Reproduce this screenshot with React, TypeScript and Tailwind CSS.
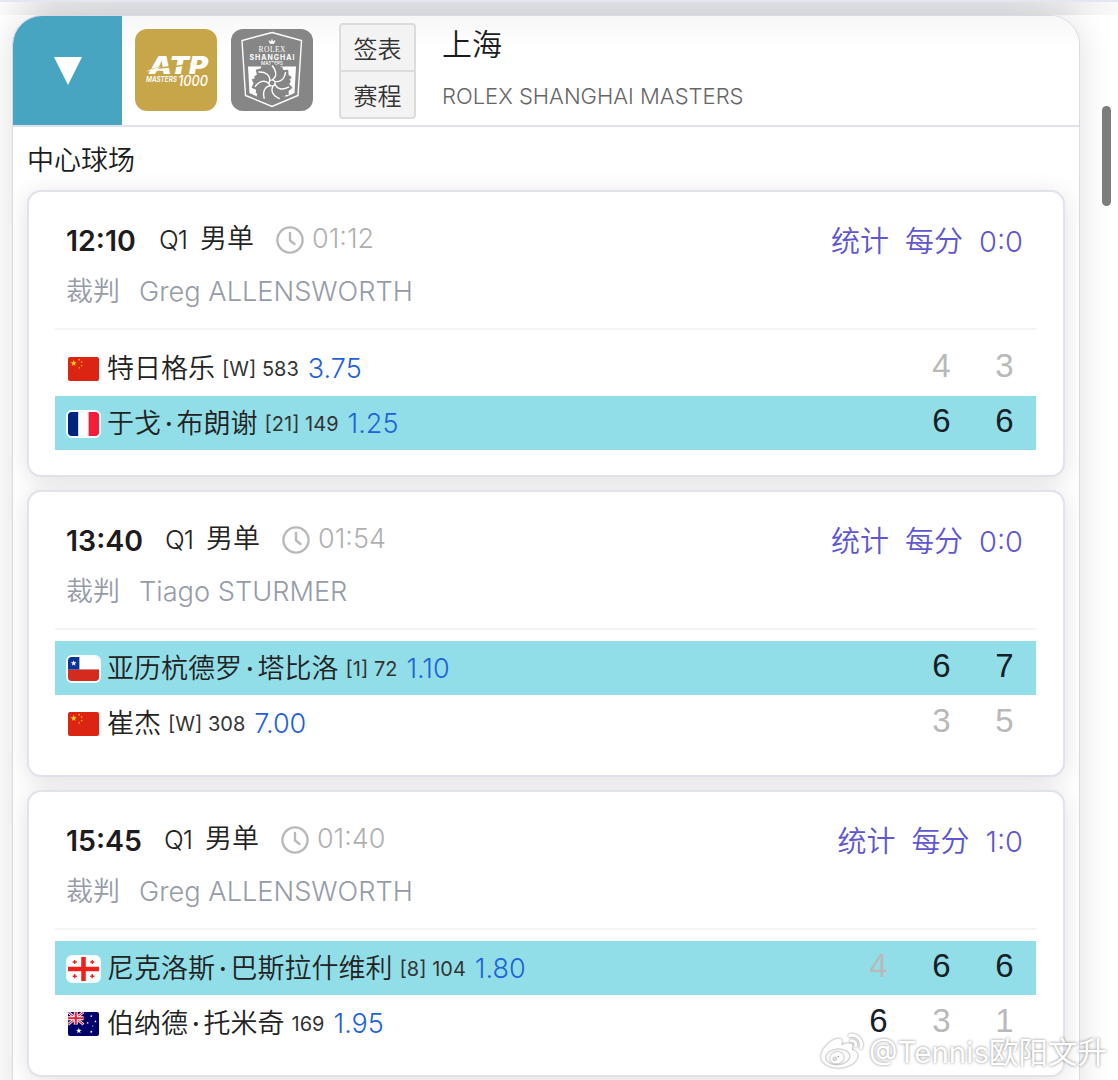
import { Fragment, type ReactNode } from 'react'
import { FaWeibo } from 'react-icons/fa'

type Country = 'CHN' | 'FRA' | 'CHI' | 'GEO' | 'AUS'

type Player = {
  name: string;
  country: Country;
  rank: string;
  odds: string;
  scores: [string, boolean][]; // [games, set won]
  winner?: boolean;
};

type Match = {
  time: string;
  round: string;
  duration: string;
  umpire: string;
  h2h: string;
  players: Player[];
};

const MATCHES: Match[] = [
  {
    time: '12:10',
    round: 'Q1',
    duration: '01:12',
    umpire: 'Greg ALLENSWORTH',
    h2h: '0:0',
    players: [
      { name: '特日格乐', country: 'CHN', rank: '[W] 583', odds: '3.75', scores: [['4', false], ['3', false]] },
      { name: '于戈·布朗谢', country: 'FRA', rank: '[21] 149', odds: '1.25', scores: [['6', true], ['6', true]], winner: true },
    ],
  },
  {
    time: '13:40',
    round: 'Q1',
    duration: '01:54',
    umpire: 'Tiago STURMER',
    h2h: '0:0',
    players: [
      { name: '亚历杭德罗·塔比洛', country: 'CHI', rank: '[1] 72', odds: '1.10', scores: [['6', true], ['7', true]], winner: true },
      { name: '崔杰', country: 'CHN', rank: '[W] 308', odds: '7.00', scores: [['3', false], ['5', false]] },
    ],
  },
  {
    time: '15:45',
    round: 'Q1',
    duration: '01:40',
    umpire: 'Greg ALLENSWORTH',
    h2h: '1:0',
    players: [
      { name: '尼克洛斯·巴斯拉什维利', country: 'GEO', rank: '[8] 104', odds: '1.80', scores: [['4', false], ['6', true], ['6', true]], winner: true },
      { name: '伯纳德·托米奇', country: 'AUS', rank: '169', odds: '1.95', scores: [['6', true], ['3', false], ['1', false]] },
    ],
  },
]

const STAR = 'M0 -1L.24 -.32L.95 -.31L.38 .12L.59 .81L0 .4L-.59 .81L-.38 .12L-.95 -.31L-.24 -.32Z'

const FLAGS: Record<Country, ReactNode> = {
  CHN: (
    <>
      <path d="M0 0H30V23H0Z" fill="#dc2412" />
      <g fill="#ffd91c">
        <path d={STAR} transform="translate(5.5 6) scale(3.2)" />
        <path d={STAR} transform="translate(10.8 2.6) scale(1.1)" />
        <path d={STAR} transform="translate(13.2 4.9) scale(1.1)" />
        <path d={STAR} transform="translate(13.2 8.2) scale(1.1)" />
        <path d={STAR} transform="translate(10.8 10.4) scale(1.1)" />
      </g>
    </>
  ),
  FRA: (
    <>
      <path d="M0 0H10V23H0Z" fill="#00237e" />
      <path d="M10 0H20V23H10Z" fill="#fff" />
      <path d="M20 0H30V23H20Z" fill="#f41c38" />
    </>
  ),
  CHI: (
    <>
      <path d="M0 0H30V12H0Z" fill="#fff" />
      <path d="M0 12H30V23H0Z" fill="#d52b1e" />
      <path d="M0 0H11V12H0Z" fill="#0a3597" />
      <path d={STAR} transform="translate(5.5 6) scale(3)" fill="#fff" />
    </>
  ),
  GEO: (
    <>
      <path d="M0 0H30V23H0Z" fill="#fff" />
      <path d="M12.8 0H17.2V23H12.8ZM0 9.3H30V13.7H0Z" fill="#f0201c" />
      <path
        d="M6.5 2.8V6.8M4.5 4.8H8.5M23.5 2.8V6.8M21.5 4.8H25.5M6.5 16.4V20.4M4.5 18.4H8.5M23.5 16.4V20.4M21.5 18.4H25.5"
        stroke="#f0201c"
        strokeWidth="1.3"
      />
    </>
  ),
  AUS: (
    <>
      <path d="M0 0H30V23H0Z" fill="#00006b" />
      <path d="M0 0L15 12M15 0L0 12" stroke="#fff" strokeWidth="2.6" />
      <path d="M0 0L15 12M15 0L0 12" stroke="#e2203a" strokeWidth="1" />
      <path d="M7.5 0V12M0 6H15" stroke="#fff" strokeWidth="3.8" />
      <path d="M7.5 0V12M0 6H15" stroke="#e2203a" strokeWidth="2" />
      <g fill="#fff">
        <path d={STAR} transform="translate(10.5 18) scale(2.8)" />
        <path d={STAR} transform="translate(22.5 4) scale(1.3)" />
        <path d={STAR} transform="translate(19 10.5) scale(1.3)" />
        <path d={STAR} transform="translate(26.5 9) scale(1.3)" />
        <path d={STAR} transform="translate(24 13.5) scale(.8)" />
        <path d={STAR} transform="translate(22.5 19) scale(1.4)" />
      </g>
    </>
  ),
}

const Flag = ({ country, framed }: { country: Country; framed?: boolean }) => (
  <span className={`mt-px shrink-0 overflow-hidden ${framed ? '-ml-0.5 mr-[6px] rounded-[6px] border-2 border-white/90' : 'mr-2 rounded-[2px]'}`}>
    <svg viewBox="0 0 30 23" className="block h-[24px] w-[31px]" preserveAspectRatio="none">
      {FLAGS[country]}
    </svg>
  </span>
)

const ClockIcon = () => (
  <svg viewBox="0 0 28 28" className="size-7" fill="none" stroke="#b9b9b9" strokeWidth="2.4" strokeLinecap="round" strokeLinejoin="round">
    <circle cx="14" cy="14" r="12.6" />
    <path d="M14 7V14.5L18.5 18" />
  </svg>
)

const AtpLogo = () => (
  <svg viewBox="0 0 82 82" className="size-[82px] rounded-xl bg-[#c7a549]" fill="#fff">
    <g fontFamily="Inter, sans-serif" fontStyle="italic">
      <text x="14" y="44.5" fontSize="25" fontWeight="900" textLength="59" lengthAdjust="spacingAndGlyphs">ATP</text>
      <text x="11" y="53" fontSize="8" fontWeight="600" textLength="31" lengthAdjust="spacingAndGlyphs">MASTERS</text>
      <text x="43" y="57" fontSize="14" fontWeight="500" textLength="30" lengthAdjust="spacingAndGlyphs">1000</text>
    </g>
    <path d="M12 41C26 38 42 38 59 34.5" fill="none" stroke="#c7a549" strokeWidth="1.3" />
    <path d="M11 42.5C15 40 20 39 25 38.5L22 40.5Z" />
    <circle cx="57" cy="35" r="1.8" />
  </svg>
)

const PETALS = [0, 51, 103, 154, 206, 257, 309]

const RolexLogo = () => (
  <svg viewBox="0 0 82 82" className="size-[82px] rounded-xl bg-[#868686]" fill="none" stroke="#fff">
    <path d="M41 3.5L70.5 11.5L67 66.5L41 77.5L14.5 66.5L11 11.5Z" strokeWidth="1.4" />
    <path d="M38 11.5L39 14.5H43L44 11.5L42 13L41 10.5L40 13Z" fill="#fff" strokeWidth=".6" />
    <g fill="#fff" stroke="none" textAnchor="middle">
      <text x="41" y="23" fontSize="7.5" fontFamily="Liberation Serif, serif" textLength="27">ROLEX</text>
      <text x="41" y="30.5" fontSize="7" fontWeight="700" fontFamily="Inter, sans-serif" textLength="45">SHANGHAI</text>
      <text x="41" y="35.8" fontSize="4.5" fontWeight="500" fontFamily="Inter, sans-serif" textLength="22">MASTERS</text>
    </g>
    <path d="M17 37.5H65L63.5 64L56 67.5H26L18.5 64Z" fill="#fff" stroke="none" />
    {PETALS.map((deg) => (
      <path
        key={deg}
        transform={`rotate(${deg} 41 54)`}
        d="M41 55L35 46L32 40L35 36L38 37L41 33L45 36L49 35L50 41L46 47Z"
        fill="#868686"
        stroke="none"
      />
    ))}
    {PETALS.map((deg) => (
      <path key={deg} transform={`rotate(${deg} 41 54)`} d="M41 51C46 48 46 42 41 36.5" strokeWidth="1.4" />
    ))}
    <circle cx="41" cy="54" r="3" strokeWidth="1.2" />
  </svg>
)

// The separator dot takes about half a character
const PlayerName = ({ name }: { name: string }) => (
  <span className="text-[27px] leading-8 text-[#222]">
    {name.split('·').map((part, i) => (
      <Fragment key={part}>
        {i > 0 && <span className="mx-[3.700px] font-medium">·</span>}
        {part}
      </Fragment>
    ))}
  </span>
)

const PlayerRow = ({ player }: { player: Player }) => (
  <div className={`flex h-[54px] items-center pl-[13px] pt-0.5 ${player.winner ? 'bg-[#92dee8]' : ''}`}>
    <Flag country={player.country} framed={player.winner} />
    <PlayerName name={player.name} />
    <span className="ml-[7px] text-[20px] font-normal leading-8 text-[#333]">{player.rank}</span>
    <span className="ml-[9px] text-[27px] leading-8 text-[#1d62da]">{player.odds}</span>
    <div className="mb-1.5 ml-auto flex font-[Liberation_Sans,sans-serif] text-[33px] leading-9">
      {player.scores.map(([games, won], i) => (
        <span key={i} className={`w-[63px] text-center ${won ? 'text-[#152026]' : 'text-[#b9b9b9]'}`}>{games}</span>
      ))}
    </div>
  </div>
)

const MatchCard = ({ match }: { match: Match }) => (
  <article className="h-[287.500px] shrink-0 rounded-[14px] border-2 border-[#e0e2ec] bg-white pl-[26px] pr-[27px] shadow-[0_4px_24px_rgba(0,0,0,0.12)]">
    <div className="h-[138px] border-b-2 border-[#f3f3f5] px-[11px] pt-[30px]">
      <div className="flex h-9 items-center">
        <span className="min-w-[71px] pt-1 text-[28.500px] font-semibold text-[#1c1c1e]">{match.time}</span>
        <span className="ml-[22px] text-[26px] tracking-[-1px] text-[#222]">{match.round}</span>
        <span className="ml-[13px] text-[27px] text-[#222]">男单</span>
        <span className="ml-[22px] flex items-center gap-2 text-[27px] font-light text-[#b0b0b0]">
          <ClockIcon />
          {match.duration}
        </span>
        <span className="ml-auto mr-0.5 flex gap-4 pt-1 text-[29px] text-[#5f57d0]">
          <a>统计</a>
          <a>每分</a>
          <a>{match.h2h}</a>
        </span>
      </div>
      <div className="mt-[17px] flex h-9 items-center gap-[19px] text-[27px] text-[#969ba8]">
        <span>裁判</span>
        <span className="text-[27.200px]">{match.umpire}</span>
      </div>
    </div>
    <div className="flex flex-col gap-px pt-[11px]">
      {match.players.map((p) => <PlayerRow key={p.name} player={p} />)}
    </div>
  </article>
)

export default function App() {
  return (
    <div className="relative h-[1080px] w-[1118px] overflow-hidden border-t-2 border-[#e4e7f2] bg-white font-[350] font-[Inter,Noto_Sans_CJK_SC,sans-serif]">
      {/* shadow of the section above */}
      <div className="h-[13px] bg-[linear-gradient(90deg,#fafafb,#e8e8ea_5%,#e4e5e8_10%,#e4e5e8_90%,#ececee_95%,#fafafb)]" />
      <main className="mx-3 h-[1100px] w-[1068px] overflow-hidden rounded-t-[30px] border border-[#d8dae6] bg-white shadow-[0_0_32px_rgba(0,0,0,0.13)]">
        <header className="flex h-[111px] border-b-2 border-[#dfe2e8] bg-linear-to-b from-[#f7f7f8] to-white to-30%">
          <button className="flex w-[109px] items-center justify-center bg-[#47a5c2]">
            <svg viewBox="0 0 28 28" className="size-7" fill="#fff"><path d="M0 0H28L14 28Z" /></svg>
          </button>
          <div className="flex gap-[14px] pl-[13px] pt-[13px]">
            <AtpLogo />
            <RolexLogo />
          </div>
          <div className="ml-[26px] mt-[7px] flex h-24 w-[77px] flex-col rounded border-2 border-[#dcdcdc] bg-[#f3f3f3] text-[24px] text-[#333]">
            <button className="flex-1 border-b-2 border-[#dcdcdc] pt-1">签表</button>
            <button className="flex-1 pt-1">赛程</button>
          </div>
          <div className="ml-[26px] flex flex-col pt-2">
            <h1 className="text-[30px] leading-10 text-[#1c1c1e]">上海</h1>
            <p className="mt-4 text-[22px] font-light leading-8 text-[#666]">ROLEX SHANGHAI MASTERS</p>
          </div>
        </header>
        <section className="px-[14px]">
          <h2 className="flex h-[62.500px] items-center pt-1.5 text-[27px] text-[#1c1c1e]">中心球场</h2>
          <div className="flex flex-col gap-[12.500px]">
            {MATCHES.map((m) => <MatchCard key={m.time} match={m} />)}
          </div>
        </section>
      </main>
      {/* scrollbar thumb */}
      <div className="absolute right-[7px] top-[104px] h-[100px] w-[9px] rounded-full bg-[#7d7d7d]" />
      <div className="absolute right-[11px] top-[1028px] flex items-center gap-1.5 text-[29.500px] font-normal text-white [text-shadow:0_0_3px_rgba(0,0,0,0.5)]">
        <FaWeibo className="size-[42px] drop-shadow-[0_0_1px_rgba(0,0,0,0.5)]" />
        @Tennis欧阳文升
      </div>
    </div>
  )
}
